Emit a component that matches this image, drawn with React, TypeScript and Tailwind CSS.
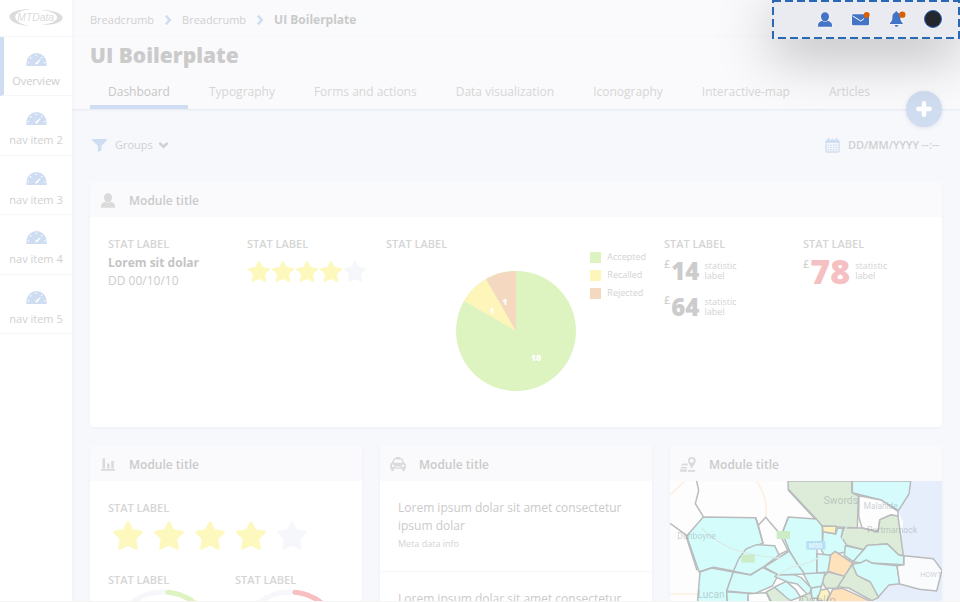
import { useId, type ReactNode } from "react";

const tabs = ["Dashboard", "Typography", "Forms and actions", "Data visualization", "Iconography", "Interactive-map", "Articles"];
const navItems = ["Overview", "nav item 2", "nav item 3", "nav item 4", "nav item 5"];

function Gauge() {
  return (
    <svg viewBox="0 0 62 40" className="h-[13px] w-[21px]" aria-hidden="true">
      <path d="M0 40V31a31 31 0 0 1 62 0v9Z" fill="#cfddf2" />
      <g fill="#fff">
        <circle cx="6" cy="30" r="2.4" />
        <circle cx="13" cy="15" r="2.4" />
        <circle cx="30" cy="7" r="2.4" />
        <circle cx="47" cy="14" r="2.4" />
        <circle cx="56" cy="30" r="2.4" />
        <path d="m28 31 14-12 2 2-10 13c-3 3-9 1-6-3Z" />
      </g>
    </svg>
  );
}

function Logo() {
  return (
    <svg viewBox="0 0 162 54" className="h-[18px] w-[54px]" role="img" aria-label="MTData">
      <g fill="#dcdcdc">
        <path d="M67 1C30 0-2 9 1 25c3 14 28 24 64 27-27-6-44-15-46-26C17 13 35 4 67 1Z" />
        <path d="M95 2c38 1 68 12 66 25-2 14-29 22-64 20 26-2 44-9 47-19 3-12-14-21-49-26Z" />
        <text x="80" y="35" textAnchor="middle" fontSize="31" fontStyle="italic" fontFamily="Liberation Sans, sans-serif">MTData</text>
      </g>
    </svg>
  );
}

function Person({ className }: { className: string }) {
  return (
    <svg viewBox="0 0 42 44" className={className} fill="currentColor" aria-hidden="true">
      <path d="M21 0c7 0 12 5 12 12 0 8-5 16-12 16S9 20 9 12C9 5 14 0 21 0ZM0 44v-5c0-7 5-10 12-13 5 5 13 5 18 0 7 3 12 6 12 13v5Z" />
    </svg>
  );
}

function BarsIcon() {
  return (
    <svg viewBox="0 0 42 40" className="ml-px h-[13px] w-[14px]" fill="currentColor" aria-hidden="true">
      <path d="M0 34h42v5H0ZM4 1h8v31H4ZM18 17h8v15h-8ZM31 9h8v23h-8Z" />
    </svg>
  );
}

function TaxiIcon() {
  return (
    <svg viewBox="0 0 48 46" className="h-[15px] w-4" fill="currentColor" aria-hidden="true">
      <path fillRule="evenodd" d="M17 0h14v4h6l6 14c3 1 5 4 5 7v11h-3v5c0 4-8 4-8 0v-5H11v5c0 4-8 4-8 0v-5H0V25c0-3 2-6 5-7l6-14h6ZM14 8l-4 10h28L34 8ZM9 23a4 4 0 1 0 .1 0ZM39 23a4 4 0 1 0 .1 0ZM16 29v3h16v-3Z" />
    </svg>
  );
}

function MapIcon() {
  return (
    <svg viewBox="0 0 46 44" className="h-[15px] w-4" fill="currentColor" aria-hidden="true">
      <path fillRule="evenodd" d="M34 0c7 0 12 5 12 11 0 7-8 13-11 22h-3C30 24 23 18 23 11 23 5 27 0 34 0Zm0 5a6 6 0 1 0 .1 0Z" />
      <path d="m6 20 15-1 3 5-22 1ZM3 29h17v5H1ZM0 37h20v6H0ZM23 38h21v5H23Z" />
    </svg>
  );
}

function Chevron({ className }: { className: string }) {
  return (
    <svg viewBox="0 0 20 28" className={className} fill="none" stroke="currentColor" strokeWidth="7" aria-hidden="true">
      <path d="m4 2 11 12L4 26" />
    </svg>
  );
}

function Star({ on, className }: { on: boolean; className: string }) {
  return (
    <svg viewBox="0 0 90 86" className={className} aria-hidden="true">
      <path
        d="M45 5 56 28 85 33 65 52 70 81 45 69 20 81 25 52 5 33 34 28Z"
        fill={on ? "#fdf8bd" : "#f6f7fb"}
        stroke={on ? "#fdf8bd" : "#f6f7fb"}
        strokeWidth="9"
        strokeLinejoin="round"
      />
    </svg>
  );
}

function Stars({ large = false }: { large?: boolean }) {
  return (
    <div role="img" aria-label="4 out of 5" className={large ? "mt-1 flex gap-[11px] pl-[5px]" : "mt-2 flex gap-[2px] pl-px"}>
      {[1, 2, 3, 4, 5].map((n) => (
        <Star key={n} on={n < 5} className={large ? "h-[29px] w-[30px] shrink-0" : "h-[21px] w-[22px] shrink-0"} />
      ))}
    </div>
  );
}

function StatLabel() {
  return <h3 className="text-[11px] leading-[18px] font-semibold text-[#d5d5d5]">STAT LABEL</h3>;
}

function Card({ icon, children }: { icon: ReactNode; children: ReactNode }) {
  return (
    <section className="overflow-hidden rounded-[4px] bg-white shadow-[0_1px_3px_rgba(90,100,130,0.06)]">
      <header className="flex h-9 items-center bg-[#fafafc] pt-[2px] pl-[10px] text-[#dadada]">
        <span className="flex w-[29px]">{icon}</span>
        <h2 className="pt-[2px] text-[12px] leading-[18px] font-semibold text-[#cacaca]">Module title</h2>
      </header>
      {children}
    </section>
  );
}

function Money({ value, large = false }: { value: string; large?: boolean }) {
  return (
    <div className="flex h-9 gap-[5px]">
      <div className="flex gap-px">
        <span className="mt-[2px] text-[11px] leading-[18px] font-semibold text-[#d3d3d3]">£</span>
        <strong className={large ? "text-[34px] leading-9 font-extrabold text-[#f4c0c2]" : "text-[24px] leading-9 font-extrabold text-[#cccccc]"}>
          {value}
        </strong>
      </div>
      <span className="mt-2 w-10 text-[9px] leading-[10px] text-[#d3d3d3]">statistic label</span>
    </div>
  );
}

const slices = [
  { name: "Accepted", color: "bg-[#ddf4c1]" },
  { name: "Recalled", color: "bg-[#fdf5ba]" },
  { name: "Rejected", color: "bg-[#f5d8c0]" },
];

function Pie() {
  return (
    <svg viewBox="0 0 120 120" className="col-start-2 mt-[18px] size-[120px]" role="img" aria-label="Accepted 10, Recalled 1, Rejected 1">
      <circle cx="60" cy="60" r="60" fill="#ddf4c1" />
      <path d="M60 60 8.04 30A60 60 0 0 1 30 8.04Z" fill="#fdf5ba" />
      <path d="M60 60 30 8.04A60 60 0 0 1 60 0Z" fill="#f5d8c0" />
      <g fill="#fff" fontSize="9" fontWeight="800" textAnchor="middle">
        <text x="80" y="90">10</text>
        <text x="36" y="43">1</text>
        <text x="49" y="34">1</text>
      </g>
    </svg>
  );
}

function Donut({ color }: { color: string }) {
  const id = useId();
  return (
    <svg viewBox="0 0 108 108" className="ml-[1px] size-[108px]" role="img" aria-labelledby={id}>
      <title id={id}>Progress</title>
      <circle cx="54" cy="54" r="51" fill="none" stroke="#f6f7fb" strokeWidth="5" />
      <path d="M59 3.3A51 51 0 0 1 105 54" fill="none" stroke={color} strokeWidth="5" strokeLinecap="round" />
    </svg>
  );
}

function AreaMap() {
  return (
    <svg viewBox="30 153 816 363" className="block w-full" role="img" aria-label="Area map of Dublin">
      <rect x="30" y="153" width="816" height="500" fill="#fdfdfd" />
      <path d="M745 153h101v363H640l60-60 30-180-18-32Z" fill="#e6eefc" />
      <g fill="none" stroke="#fdf0e2" strokeWidth="5">
        <path d="M30 195 75 153M290 153c30 50 30 70 28 110M30 492h90" />
      </g>
      <g stroke="#b9bbbd" strokeWidth="4.5" strokeLinejoin="round">
        <path d="m384 153 1 28 101 108 106 5 3-96-19-10-1-35Z" fill="#dcecd9" />
        <path d="M577 153v35l86 22 52 32 32-50 5-39Z" fill="#d5fbfd" />
        <path d="m597 197 66 13 51 34v14l-22-3-33 15-5 34-48-10-10-35Z" fill="#fdfdfe" />
        <path d="m606 294 48 11 6-36 32-14 22 3 16 118-14-1-34-34-61 6-10 12-54-14-15-21 10-31Z" fill="#dcecd9" />
        <path d="m80 318 50-57 157 2 22 76-27 12-40 29-18 44-63-12-44 13Z" fill="#d4fcfb" />
        <path d="m385 261 84 6 18 22v46l-16 10v27l-1 59-37 4-20-30-24-41-22-55Z" fill="#d4fcfb" />
        <path d="m290 344 54 3 13 28-45 35-40 24-52-10 16-37 22-30Z" fill="#d4fcfb" />
        <path d="m388 363 24 39 22 30-80 3-42-24Z" fill="#d4fcfb" />
        <path d="m120 426 35-12 65 12-20 57 4 90h-96Z" fill="#d4fcfb" />
        <path d="m220 426 52 9 36-22 47 22-18 33-53 23-84-8Z" fill="#d4fcfb" />
        <path d="m200 485 84 6-20 8v50h-60Z" fill="#d4fcfb" />
        <path d="m489 305 38 7 6-18 16 1-5 26 15 23-6 23-58 12-20-35 13-8Z" fill="#d4fcfb" />
        <path d="m487 288 42 1-3 22-37-6Z" fill="#fdf3c2" />
        <path d="m471 371 41 5-7 50-34 3Z" fill="#d4fcfb" />
        <path d="m525 364 53 35-24 41-50-16 8-49Z" fill="#fee2bc" />
        <path d="m556 347 55 12-31 36-27-19Z" fill="#d4fcfb" />
        <path d="m611 359 11-13 60-4 34 33 15 3v26l-96-5-17-8-15 8-24-4Z" fill="#d4fcfb" />
        <path d="m579 402 24-4 16-8 18 10 74 7 8 54-32 4-33 37-28-49-49-18Z" fill="#d4fcfb" />
        <path d="m577 404 14 32 40 20 25 46-20 10-70-38-35-4Z" fill="#dcecd9" />
        <path d="m504 426 50 13-23 35-33 1-15-25Z" fill="#dcecd9" />
        <path d="m430 431 65-3-10 41-32 6Z" fill="#d4fcfb" />
        <path d="m354 435 48-1 22 9 30 32-7 23-35-36-30-6-38-17Z" fill="#d4fcfb" />
        <path d="m344 471 35-17 28 25 14 22-40 15-44-33Z" fill="#d4fcfb" />
        <path d="m344 472-25 14 26 50h80l-44-32Z" fill="#dcecd9" />
        <path d="m264 491 55-3 18 40h-72Z" fill="#fdfdfd" />
        <path d="m421 500 31-12 14 48h-50Z" fill="#dcecd9" />
        <path d="m453 475 30-6-3 36h-24Z" fill="#d4fcfb" />
        <path d="m482 480 20-3 8 14-11 25-28-6Z" fill="#fdf3c2" />
        <path d="m500 516 18-38 30-3 90 42v20H500Z" fill="#fee2bc" />
        <path d="m732 377 88 9 26 35-16 62-52-5-59-16-8-55 21-3Z" fill="#fafbfd" />
      </g>
      <g fill="none" stroke="#b9bbbd" strokeWidth="4.5" strokeLinejoin="round">
        <path d="M110 153l6 28-10 40 24 39M30 280l47 34 34 107M469 267 385 178M309 340l-14-54 22-24 40 46 27 54M295 286l-8-23M368 305l17-44M355 375l31-15" />
      </g>
      <g fill="none" stroke="#d9ece8" strokeWidth="4">
        <path d="M125 295c50 50 110 80 240 90M350 440c40-40 90-30 130-60M585 200c-20 60-20 90-40 130" />
      </g>
      <g fill="#ccebc7">
        <rect x="350" y="303" width="40" height="24" />
        <rect x="244" y="374" width="40" height="24" />
      </g>
      <rect x="439" y="333" width="57" height="26" fill="#b6e0f5" />
      <g fontFamily="Roboto, Liberation Sans, sans-serif" fill="#8b949a" fillOpacity="0.45">
        <text x="491" y="223" fontSize="31">Swords</text>
        <text x="611" y="236" fontSize="25">Malahide</text>
        <text x="621" y="308" fontSize="26">Portmarnock</text>
        <text x="52" y="327" fontSize="26">Dunboyne</text>
        <text x="113" y="504" fontSize="30">Lucan</text>
        <text x="422" y="526" fontSize="38">Dublin</text>
        <text x="781" y="441" fontSize="22">HOWTH</text>
      </g>
      <text x="446" y="354" fontSize="20" fontWeight="700" fill="#ecf8fe" fontFamily="Roboto, sans-serif">M50</text>
    </svg>
  );
}

function HighlightedActions() {
  return (
    <div className="absolute top-0 right-0 flex h-[39px] w-[188px] items-center justify-end bg-[#e9ebf0] pr-[9px] pb-px text-[#4374c6] shadow-[0_14px_56px_rgba(0,0,0,0.3)]">
      <svg className="absolute inset-0 size-full" fill="none" stroke="#2a68b5" strokeWidth="2" strokeDasharray="8 4" aria-hidden="true">
        <rect x="1" y="1" width="186" height="37" />
      </svg>
      <button type="button" aria-label="Profile" className="flex w-9 justify-center drop-shadow-[0_0_1px_white]">
        <Person className="h-[15px] w-[14px]" />
      </button>
      <button type="button" aria-label="Messages" className="flex w-9 justify-center drop-shadow-[0_0_1px_white]">
        <svg viewBox="0 0 54 42" className="h-[14px] w-[18px]" aria-hidden="true">
          <rect x="0" y="7" width="51" height="33" rx="4" fill="currentColor" />
          <path d="m2 12 24 15 10-7" fill="none" stroke="#fff" strokeWidth="3" />
          <circle cx="44" cy="9" r="9" fill="#d95f02" />
        </svg>
      </button>
      <button type="button" aria-label="Notifications" className="flex w-9 justify-center drop-shadow-[0_0_1px_white]">
        <svg viewBox="-3 0 51 48" className="h-4 w-[17px]" aria-hidden="true">
          <path d="M16 4c0-4 6-4 6 0 8 3 9 9 9 16 0 9 3 12 7 16v3H0v-3c4-4 7-7 7-16 0-7 1-13 9-16ZM14 42h11c0 7-11 7-11 0Z" fill="currentColor" />
          <circle cx="37" cy="11" r="9.5" fill="#d95f02" />
        </svg>
      </button>
      <button type="button" aria-label="Account" className="mx-[9px] size-[18px] rounded-full border border-[#2f62b8] bg-[#24272b] drop-shadow-[0_0_1px_white]" />
    </div>
  );
}

export default function App() {
  return (
    <div className="relative flex h-screen overflow-hidden border-b border-[#f4f4f5] bg-[#f6f8fc] font-['Open_Sans',sans-serif] text-[12px]">
      <aside className="z-10 w-[72px] shrink-0 bg-white shadow-[1px_0_3px_rgba(90,100,130,0.04)]">
        <div className="flex h-[37px] items-center justify-center border-b border-[#f7f7f8]">
          <Logo />
        </div>
        <nav className="grid h-[297px] grid-rows-5">
          {navItems.map((item, i) => (
            <a
              key={item}
              href="#"
              className={`flex flex-col items-center gap-[6px] border-b border-b-[#f7f7f8] pt-4 text-[11px] leading-[18px] ${i === 0 ? "border-l-4 border-l-[#cfddf2] pr-1 text-[#cdcdcd]" : "text-[#d0d0d0]"}`}
            >
              <Gauge />
              {item}
            </a>
          ))}
        </nav>
      </aside>

      <div className="min-w-0 flex-1">
        <header className="relative bg-[#fafafc] shadow-[0_1px_2px_rgba(90,100,130,0.1)]">
          <nav aria-label="Breadcrumb" className="flex h-[37px] items-center border-b border-[#f7f7f9] pt-1 pl-[18px] text-[11px] leading-[18px] text-[#d0d0d0]">
            <a href="#">Breadcrumb</a>
            <Chevron className="mx-2 h-[10px] w-[12px] text-[#cfddf2]" />
            <a href="#">Breadcrumb</a>
            <Chevron className="mx-2 h-[10px] w-[12px] text-[#cfddf2]" />
            <span className="text-[12px] font-bold text-[#cacaca]">UI Boilerplate</span>
          </nav>
          <h1 className="pt-[3px] pl-[18px] text-[21px] leading-[30px] font-extrabold text-[#cbcbcb]">UI Boilerplate</h1>
          <nav aria-label="Sections" className="flex gap-[3px] pl-[18px] leading-[18px] text-[#d6d6d6]">
            {tabs.map((tab, i) => (
              <a key={tab} href="#" className={`h-[39px] border-b-4 px-[18px] pt-[13px] whitespace-nowrap ${i === 0 ? "border-[#cfddf2] text-[#c6c6c6]" : "border-transparent"}`}>
                {tab}
              </a>
            ))}
          </nav>
          <button type="button" aria-label="Add" className="absolute right-[18px] -bottom-[18px] flex size-9 items-center justify-center rounded-full bg-[#d0dcef] shadow-[0_1px_4px_rgba(90,100,130,0.15)]">
            <svg viewBox="0 0 14 14" className="size-[16px]" stroke="#fff" strokeWidth="4" strokeLinecap="round" aria-hidden="true">
              <path d="M7 2v10M2 7h10" />
            </svg>
          </button>
        </header>

        <div className="flex h-[72px] items-center justify-between px-[18px] text-[11px] leading-[18px]">
          <button type="button" className="flex items-center pl-[2px] text-[#d0d0d0]">
            <svg viewBox="0 0 46 40" className="mr-2 h-[13px] w-[15px]" fill="#cfddf2" aria-hidden="true">
              <path d="M0 0h46v4L29 21v14l-11 5V21L0 4Z" />
            </svg>
            Groups
            <Chevron className="ml-[6px] h-[10px] w-[9px] rotate-90" />
          </button>
          <button type="button" className="flex items-center gap-2 pr-[3px] font-semibold text-[#d0d0d0]">
            <svg viewBox="0 0 44 46" className="h-[15px] w-[15px]" fill="none" stroke="#cfddf2" strokeWidth="4" aria-hidden="true">
              <rect x="2" y="7" width="40" height="36" rx="3" />
              <path d="M2 11h40" strokeWidth="8" />
              <path d="M10 0v11M34 0v11M22 2v6" strokeWidth="5" />
              <path d="M7 22h31M7 29h31M7 36h31" strokeDasharray="5 3" />
            </svg>
            DD/MM/YYYY --:--
          </button>
        </div>

        <main className="flex flex-col gap-[18px] px-[18px]">
          <Card icon={<Person className="ml-px h-[15px] w-[14px]" />}>
            <div className="grid h-[210px] grid-cols-6 gap-[18px] p-[18px]">
              <div className="text-[12px] leading-[18px] text-[#cccccc]">
                <StatLabel />
                <div className="pt-px">
                  <p className="font-bold text-[#c4c4c4]">Lorem sit dolar</p>
                  <p>DD 00/10/10</p>
                </div>
              </div>
              <div>
                <StatLabel />
                <Stars />
              </div>
              <div className="col-span-2">
                <StatLabel />
                <div className="grid grid-cols-[1fr_auto_1fr]">
                  <Pie />
                  <ul className="-mt-[5px] justify-self-end text-[9px] leading-[18px] text-[#d3d3d3]">
                    {slices.map((s) => (
                      <li key={s.name} className="flex items-center gap-[6px]">
                        <span className={`size-[11px] ${s.color}`} />
                        {s.name}
                      </li>
                    ))}
                  </ul>
                </div>
              </div>
              <div>
                <StatLabel />
                <Money value="14" />
                <Money value="64" />
              </div>
              <div>
                <StatLabel />
                <Money value="78" large />
              </div>
            </div>
          </Card>

          <div className="grid grid-cols-3 items-start gap-[18px]">
            <Card icon={<BarsIcon />}>
              <div className="p-[18px]">
                <StatLabel />
                <Stars large />
                <div className="mt-[21px] grid grid-cols-2 gap-[18px]">
                  <div>
                    <StatLabel />
                    <Donut color="#ddf4c1" />
                  </div>
                  <div>
                    <StatLabel />
                    <Donut color="#f8bfc0" />
                  </div>
                </div>
              </div>
            </Card>
            <Card icon={<TaxiIcon />}>
              {[0, 1].map((n) => (
                <article key={n} className="border-b border-[#f7f7f8] p-[18px]">
                  <p className="text-[12px] leading-[18px] text-[#cacaca]">Lorem ipsum dolar sit amet consectetur ipsum dolar</p>
                  <p className="text-[9px] leading-[18px] text-[#d3d3d3]">Meta data info</p>
                </article>
              ))}
            </Card>
            <Card icon={<MapIcon />}>
              <AreaMap />
            </Card>
          </div>
        </main>
      </div>

      <HighlightedActions />
    </div>
  );
}
